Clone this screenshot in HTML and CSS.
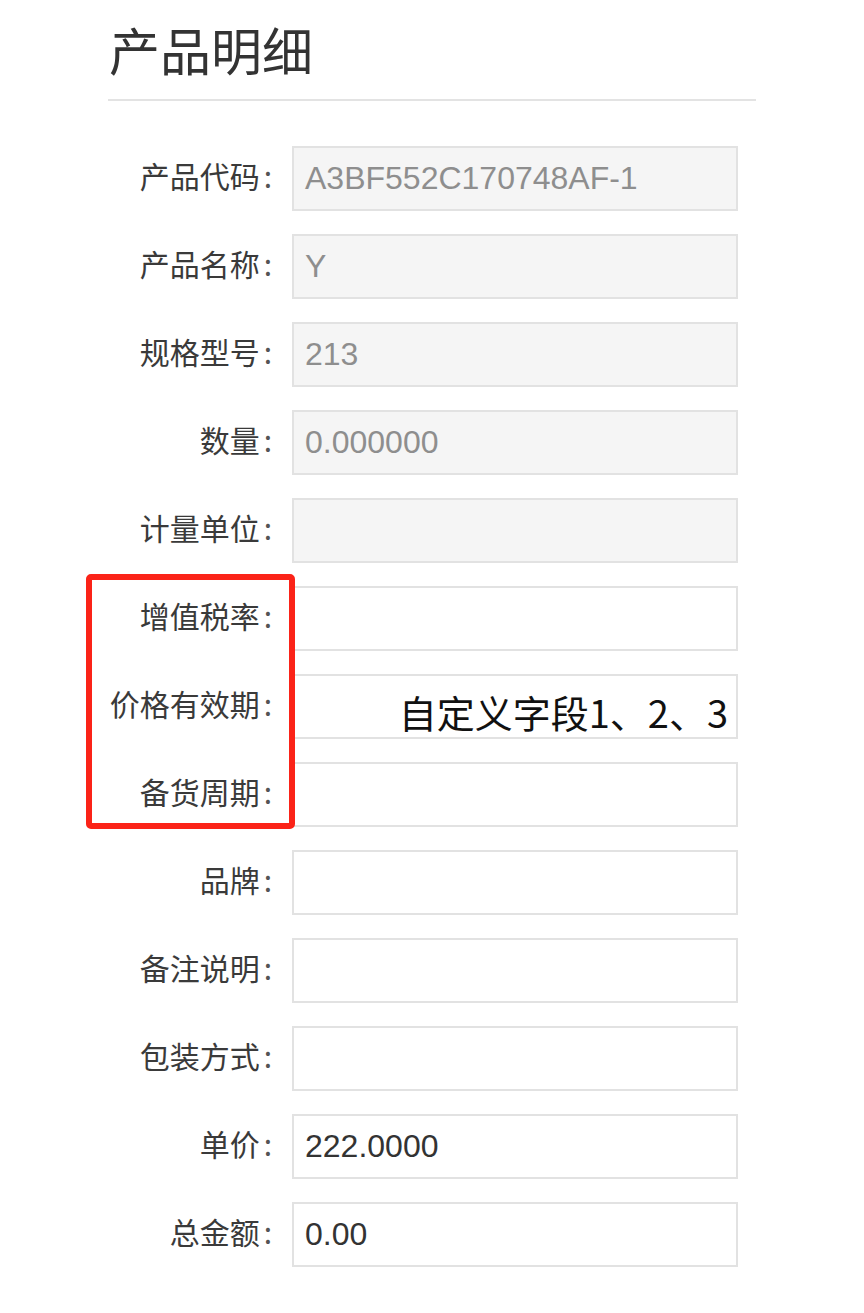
FILE: index.html
```html
<!DOCTYPE html>
<html lang="zh-CN">
<head>
<meta charset="utf-8">
<title>产品明细</title>
<link rel="stylesheet" href="styles.css">
</head>
<body>
<div class="page">
  <h1 class="title">产品明细</h1>
  <div class="form">
    <div class="row"><label class="lbl">产品代码<span class="colon">:</span></label><div class="field disabled">A3BF552C170748AF-1</div></div>
    <div class="row"><label class="lbl">产品名称<span class="colon">:</span></label><div class="field disabled">Y</div></div>
    <div class="row"><label class="lbl">规格型号<span class="colon">:</span></label><div class="field disabled">213</div></div>
    <div class="row"><label class="lbl">数量<span class="colon">:</span></label><div class="field disabled">0.000000</div></div>
    <div class="row"><label class="lbl">计量单位<span class="colon">:</span></label><div class="field disabled"></div></div>
    <div class="row"><label class="lbl">增值税率<span class="colon">:</span></label><div class="field"></div></div>
    <div class="row"><label class="lbl">价格有效期<span class="colon">:</span></label><div class="field"><span class="note">自定义字段1、2、3</span></div></div>
    <div class="row"><label class="lbl">备货周期<span class="colon">:</span></label><div class="field"></div></div>
    <div class="row"><label class="lbl">品牌<span class="colon">:</span></label><div class="field"></div></div>
    <div class="row"><label class="lbl">备注说明<span class="colon">:</span></label><div class="field"></div></div>
    <div class="row"><label class="lbl">包装方式<span class="colon">:</span></label><div class="field"></div></div>
    <div class="row"><label class="lbl">单价<span class="colon">:</span></label><div class="field">222.0000</div></div>
    <div class="row"><label class="lbl">总金额<span class="colon">:</span></label><div class="field">0.00</div></div>
    <div class="highlight"></div>
  </div>
</div>
</body>
</html>
```
FILE: styles.css
```css
html, body {
  margin: 0;
  padding: 0;
  background: #ffffff;
}
body {
  font-family: "Noto Sans CJK SC", "Noto Sans", sans-serif;
  color: #333333;
}
.page {
  width: 648px;
  margin-left: 108px;
}
.title {
  margin: 0;
  height: 99px;
  line-height: 98px;
  font-size: 51px;
  font-weight: 400;
  color: #333333;
  border-bottom: 2px solid #e3e3e3;
  padding-left: 1px;
}
.form {
  position: relative;
  margin-top: 45px;
  display: flex;
  flex-direction: column;
  gap: 23px;
}
.row {
  display: grid;
  grid-template-columns: 167px 446px;
  column-gap: 17px;
  align-items: center;
}
.lbl {
  text-align: right;
  font-size: 30px;
  color: #3a3a3a;
  white-space: nowrap;
  line-height: 40px;
  padding-bottom: 8px;
}
.colon {
  margin-left: 4px;
  margin-right: 3px;
  color: #555555;
}
.field {
  position: relative;
  box-sizing: border-box;
  height: 65px;
  border: 2px solid #e2e2e2;
  background: #ffffff;
  padding-left: 11px;
  display: flex;
  align-items: center;
  font-family: "Liberation Sans", "Noto Sans CJK SC", sans-serif;
  font-size: 32px;
  color: #333333;
}
.field.disabled {
  background: #f5f5f5;
  color: #8e8e8e;
}
.note {
  position: absolute;
  right: 8px;
  top: 11px;
  font-family: "Noto Sans CJK SC", sans-serif;
  font-size: 38px;
  line-height: 50px;
  color: #111111;
  white-space: nowrap;
}
.highlight {
  position: absolute;
  left: -22px;
  top: 428px;
  width: 209px;
  height: 255px;
  box-sizing: border-box;
  border: 6px solid #fb2318;
  border-radius: 5px;
}
```
